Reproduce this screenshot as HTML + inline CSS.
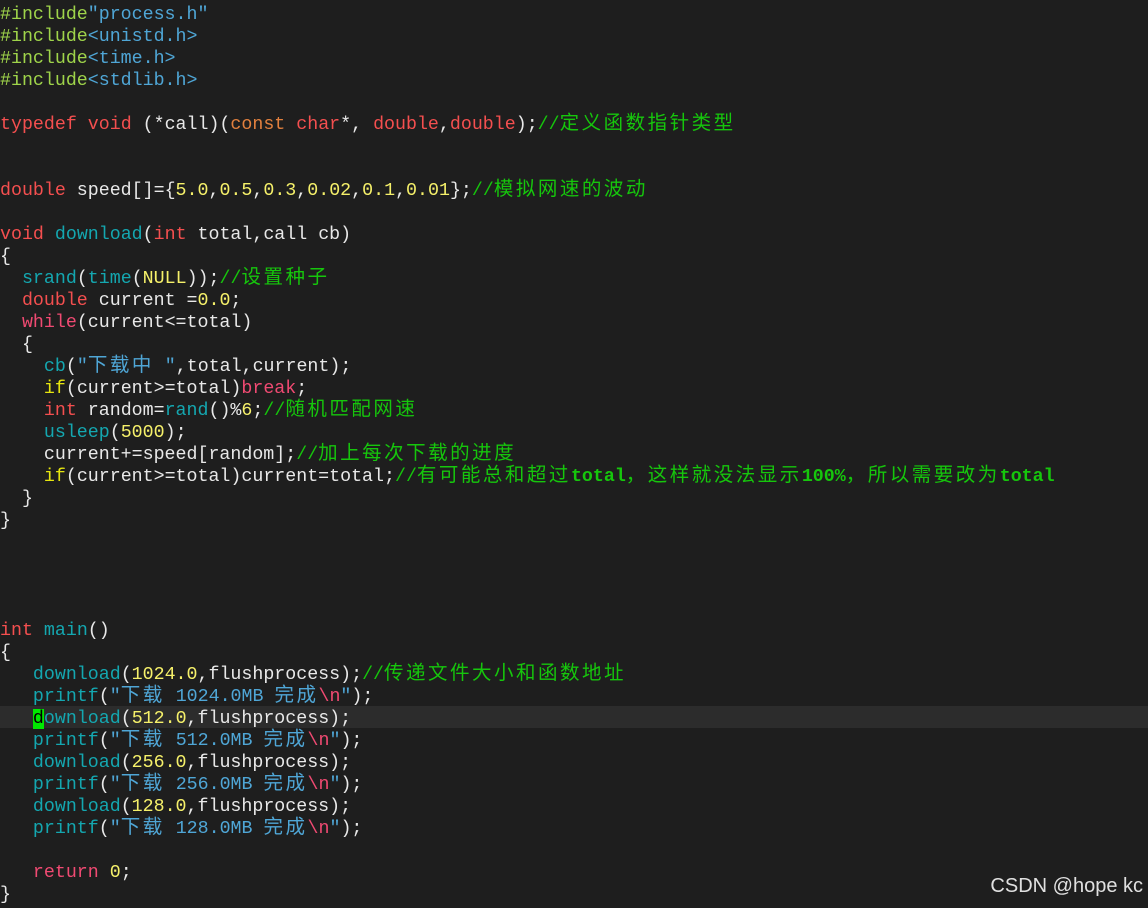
<!DOCTYPE html>
<html><head><meta charset="utf-8"><style>
html,body{margin:0;padding:0;background:#1e1e1e;width:1148px;height:908px;overflow:hidden}
.code{position:absolute;left:0;top:4px;font-family:"Liberation Mono",monospace;font-size:18.3px;color:#e8e8e8;z-index:1}
.code div{height:22px;line-height:22px;white-space:pre;overflow:visible}
i{font-style:normal;font-family:"Noto Sans CJK SC","WenQuanYi Zen Hei",sans-serif;font-size:19.5px;letter-spacing:2.5px;line-height:0}
.p{color:#9fd44a}.s{color:#4fa6d6}.k{color:#f44f4f}.o{color:#e2803e}.c{color:#16c60c}.f{color:#14a7b0}.n{color:#f5f06a}.w{color:#f04a72}.y{color:#e5e50f}
.hl{position:absolute;left:0;top:706px;width:1148px;height:22px;background:#2c2c2c;z-index:0}
.cur{background:#00e800;color:#000}
.wm{position:absolute;right:5px;top:875px;font-family:"Liberation Sans",sans-serif;font-size:20px;color:#e0e0e0;z-index:2}
</style></head><body>
<div class="hl"></div>
<div class="code">
<div><span class="p">#include</span><span class="s">"process.h"</span></div>
<div><span class="p">#include</span><span class="s">&lt;unistd.h&gt;</span></div>
<div><span class="p">#include</span><span class="s">&lt;time.h&gt;</span></div>
<div><span class="p">#include</span><span class="s">&lt;stdlib.h&gt;</span></div>
<div></div>
<div><span class="k">typedef</span> <span class="k">void</span> (*call)(<span class="o">const</span> <span class="k">char</span>*, <span class="k">double</span>,<span class="k">double</span>);<span class="c">//<i>定义函数指针类型</i></span></div>
<div></div>
<div></div>
<div><span class="k">double</span> speed[]={<span class="n">5.0</span>,<span class="n">0.5</span>,<span class="n">0.3</span>,<span class="n">0.02</span>,<span class="n">0.1</span>,<span class="n">0.01</span>};<span class="c">//<i>模拟网速的波动</i></span></div>
<div></div>
<div><span class="k">void</span> <span class="f">download</span>(<span class="k">int</span> total,call cb)</div>
<div>{</div>
<div>  <span class="f">srand</span>(<span class="f">time</span>(<span class="n">NULL</span>));<span class="c">//<i>设置种子</i></span></div>
<div>  <span class="k">double</span> current =<span class="n">0.0</span>;</div>
<div>  <span class="w">while</span>(current&lt;=total)</div>
<div>  {</div>
<div>    <span class="f">cb</span>(<span class="s">"<i>下载中</i> "</span>,total,current);</div>
<div>    <span class="y">if</span>(current&gt;=total)<span class="w">break</span>;</div>
<div>    <span class="k">int</span> random=<span class="f">rand</span>()%<span class="n">6</span>;<span class="c">//<i>随机匹配网速</i></span></div>
<div>    <span class="f">usleep</span>(<span class="n">5000</span>);</div>
<div>    current+=speed[random];<span class="c">//<i>加上每次下载的进度</i></span></div>
<div>    <span class="y">if</span>(current&gt;=total)current=total;<span class="c">//<i>有可能总和超过</i><b>total</b><i>，这样就没法显示</i><b>100%</b><i>，所以需要改为</i><b>total</b></span></div>
<div>  }</div>
<div>}</div>
<div></div>
<div></div>
<div></div>
<div></div>
<div><span class="k">int</span> <span class="f">main</span>()</div>
<div>{</div>
<div>   <span class="f">download</span>(<span class="n">1024.0</span>,flushprocess);<span class="c">//<i>传递文件大小和函数地址</i></span></div>
<div>   <span class="f">printf</span>(<span class="s">"<i>下载</i> 1024.0MB <i>完成</i><span class="w">\n</span>"</span>);</div>
<div>   <span class="cur">d</span><span class="f">ownload</span>(<span class="n">512.0</span>,flushprocess);</div>
<div>   <span class="f">printf</span>(<span class="s">"<i>下载</i> 512.0MB <i>完成</i><span class="w">\n</span>"</span>);</div>
<div>   <span class="f">download</span>(<span class="n">256.0</span>,flushprocess);</div>
<div>   <span class="f">printf</span>(<span class="s">"<i>下载</i> 256.0MB <i>完成</i><span class="w">\n</span>"</span>);</div>
<div>   <span class="f">download</span>(<span class="n">128.0</span>,flushprocess);</div>
<div>   <span class="f">printf</span>(<span class="s">"<i>下载</i> 128.0MB <i>完成</i><span class="w">\n</span>"</span>);</div>
<div></div>
<div>   <span class="w">return</span> <span class="n">0</span>;</div>
<div>}</div>
</div>
<div class="wm">CSDN @hope kc</div>
</body></html>
